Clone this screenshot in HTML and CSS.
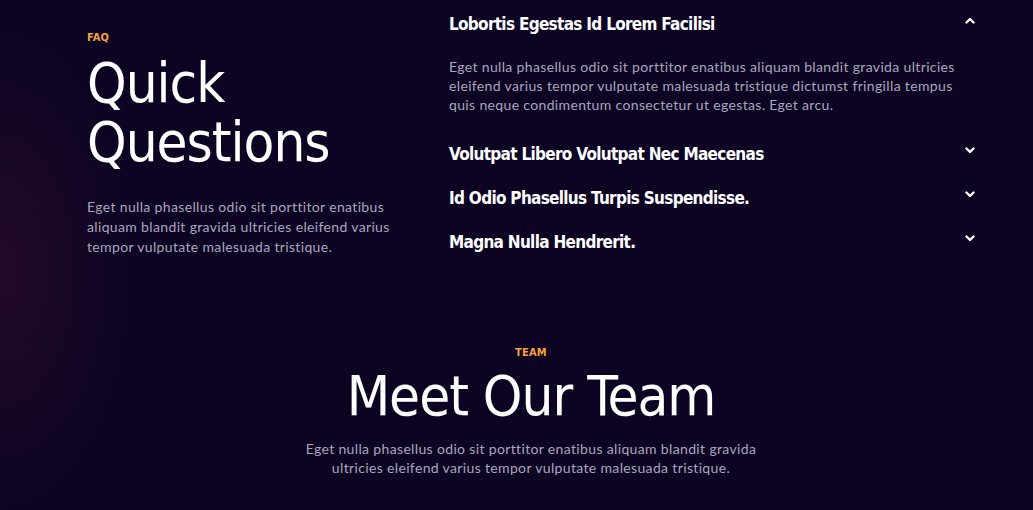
FILE: index.html
```html
<!DOCTYPE html>
<html lang="en">
<head>
<meta charset="utf-8">
<title>FAQ</title>
<link rel="stylesheet" href="styles.css">
</head>
<body>
<div class="page">
  <section class="faq">
    <div class="faq-intro">
      <div class="eyebrow">FAQ</div>
      <h2 class="display">Quick<br>Questions</h2>
      <p class="copy">Eget nulla phasellus odio sit porttitor enatibus aliquam blandit gravida ultricies eleifend varius tempor vulputate malesuada tristique.</p>
    </div>
    <div class="accordion">
      <div class="item open">
        <div class="item-head">
          <h3 class="item-title">Lobortis Egestas Id Lorem Facilisi</h3>
          <svg class="chev" width="10" height="7" viewBox="0 0 10 7"><polyline points="1.5,5.5 5,2 8.5,5.5" fill="none" stroke="#fff" stroke-width="2.4" stroke-linecap="round" stroke-linejoin="round"/></svg>
        </div>
        <p class="copy item-body">Eget nulla phasellus odio sit porttitor enatibus aliquam blandit gravida ultricies eleifend varius tempor vulputate malesuada tristique dictumst fringilla tempus quis neque condimentum consectetur ut egestas. Eget arcu.</p>
      </div>
      <div class="item">
        <div class="item-head">
          <h3 class="item-title">Volutpat Libero Volutpat Nec Maecenas</h3>
          <svg class="chev" width="10" height="7" viewBox="0 0 10 7"><polyline points="1.5,1.5 5,5 8.5,1.5" fill="none" stroke="#fff" stroke-width="2.4" stroke-linecap="round" stroke-linejoin="round"/></svg>
        </div>
      </div>
      <div class="item">
        <div class="item-head">
          <h3 class="item-title">Id Odio Phasellus Turpis Suspendisse.</h3>
          <svg class="chev" width="10" height="7" viewBox="0 0 10 7"><polyline points="1.5,1.5 5,5 8.5,1.5" fill="none" stroke="#fff" stroke-width="2.4" stroke-linecap="round" stroke-linejoin="round"/></svg>
        </div>
      </div>
      <div class="item">
        <div class="item-head">
          <h3 class="item-title">Magna Nulla Hendrerit.</h3>
          <svg class="chev" width="10" height="7" viewBox="0 0 10 7"><polyline points="1.5,1.5 5,5 8.5,1.5" fill="none" stroke="#fff" stroke-width="2.4" stroke-linecap="round" stroke-linejoin="round"/></svg>
        </div>
      </div>
    </div>
  </section>
  <section class="team">
    <div class="eyebrow">TEAM</div>
    <h2 class="display">Meet Our Team</h2>
    <p class="copy team-copy">Eget nulla phasellus odio sit porttitor enatibus aliquam blandit gravida ultricies eleifend varius tempor vulputate malesuada tristique.</p>
  </section>
</div>
</body>
</html>
```

FILE: styles.css
```css
* { box-sizing: border-box; }
html, body { margin: 0; padding: 0; }
body {
  background-color: #0d0424;
  background-image: radial-gradient(ellipse 130px 240px at 0px 270px, rgba(62, 16, 46, 0.45), rgba(13, 4, 36, 0));
  height: 510px;
  overflow: hidden;
  font-family: "Lato", "Liberation Sans", sans-serif;
  color: #fff;
}
.page {
  width: 888px;
  margin-left: 87px;
}
.faq {
  display: grid;
  grid-template-columns: 310px 1fr;
  column-gap: 52px;
}
.faq-intro {
  padding-top: 31px;
}
.eyebrow {
  font-family: "DejaVu Sans Condensed", sans-serif;
  font-weight: 700;
  font-size: 11px;
  line-height: 14px;
  color: #f7a23b;
  letter-spacing: 0.2px;
}
.display {
  margin: 0;
  font-family: "DejaVu Sans Condensed", sans-serif;
  font-weight: 400;
  font-size: 56px;
  line-height: 59px;
  letter-spacing: -1px;
  color: #fff;
}
.faq .display {
  margin-top: 8px;
}
.copy {
  margin: 0;
  font-size: 14px;
  line-height: 20px;
  letter-spacing: 0.35px;
  color: #a9a6bb;
}
.faq-intro .copy {
  margin-top: 26px;
}
.accordion {
  padding-top: 12px;
}
.item-head {
  display: flex;
  justify-content: space-between;
  align-items: center;
  height: 24px;
}
.item + .item { margin-top: 20px; }
.item-title {
  margin: 0;
  font-family: "DejaVu Sans Condensed", sans-serif;
  font-weight: 700;
  font-size: 17px;
  line-height: 24px;
  letter-spacing: -0.7px;
  color: #fff;
}
.chev { margin-top: -7px; }
.item-body {
  margin-top: 21px;
  margin-bottom: 28px;
  max-width: 515px;
  line-height: 19px;
}
.team {
  margin-top: 89px;
  display: flex;
  flex-direction: column;
  align-items: center;
  text-align: center;
}
.team .display { margin-top: 6px; }
.team-copy {
  margin-top: 14px;
  max-width: 470px;
  line-height: 19px;
}
```
